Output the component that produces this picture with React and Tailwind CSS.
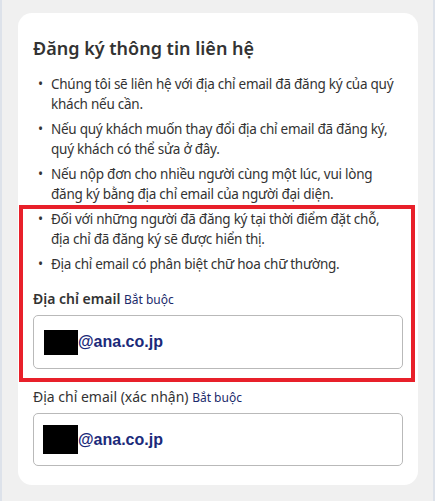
export default function App() {
  const notes = [
    "Chúng tôi sẽ liên hệ với địa chỉ email đã đăng ký của quý khách nếu cần.",
    "Nếu quý khách muốn thay đổi địa chỉ email đã đăng ký, quý khách có thể sửa ở đây.",
    "Nếu nộp đơn cho nhiều người cùng một lúc, vui lòng đăng ký bằng địa chỉ email của người đại diện.",
  ];
  const marked = [
    "Đối với những người đã đăng ký tại thời điểm đặt chỗ, địa chỉ đã đăng ký sẽ được hiển thị.",
    "Địa chỉ email có phân biệt chữ hoa chữ thường.",
  ];

  return (
    <div className="h-[501px] w-[435px] overflow-hidden bg-[#f0f0f0] border-l-2 border-r-2 border-[#dde2ea] pl-[16px] pr-[15px] pt-[13px] font-['Noto_Sans',sans-serif] text-[#333]">
      <div className="relative bg-white rounded-[14px] px-[15px] pt-[22px] pb-[19px]">
        <h1 className="text-[18px] font-semibold leading-[26px] mb-[13px]">Đăng ký thông tin liên hệ</h1>

        <ul className="flex flex-col gap-[5px] pr-[8px] text-[13.5px] tracking-[-0.25px] leading-[20px]">
          {notes.map((t, i) => (
            <li key={i} className="flex">
              <span className="w-[18px] shrink-0 pl-[5px]">•</span>
              <span>{t}</span>
            </li>
          ))}
        </ul>

        <ul className="flex flex-col gap-[5px] pr-[8px] text-[13.5px] tracking-[-0.25px] leading-[20px] mt-[5px]">
          {marked.map((t, i) => (
            <li key={i} className="flex">
              <span className="w-[18px] shrink-0 pl-[5px]">•</span>
              <span>{t}</span>
            </li>
          ))}
        </ul>

        <div className="mt-[15px]">
          <div className="text-[14px] leading-[20px]">
            <span className="font-semibold">Địa chỉ email</span>{" "}
            <span className="text-[12px] text-[#1b2a6b]">Bắt buộc</span>
          </div>
          <div className="mt-[5px] h-[54px] border border-[#b9b9b9] rounded-[5px] flex items-center px-[10px]">
            <span className="w-[34px] h-[25px] bg-black"></span>
            <span className="font-['Liberation_Sans',sans-serif] font-bold text-[16px] text-[#1b2a7a]">@ana.co.jp</span>
          </div>
        </div>

        <div className="mt-[18px]">
          <div className="text-[14px] leading-[20px]">
            <span>Địa chỉ email (xác nhận)</span>{" "}
            <span className="text-[12px] text-[#1b2a6b]">Bắt buộc</span>
          </div>
          <div className="mt-[5px] h-[53px] border border-[#b9b9b9] rounded-[5px] flex items-center px-[9px]">
            <span className="w-[35px] h-[29px] bg-black"></span>
            <span className="font-['Liberation_Sans',sans-serif] font-bold text-[16px] text-[#1b2a7a]">@ana.co.jp</span>
          </div>
        </div>

        <div className="absolute left-[1px] top-[192px] w-[396px] h-[177px] border-4 border-[#e8202a] pointer-events-none"></div>
      </div>
    </div>
  );
}
